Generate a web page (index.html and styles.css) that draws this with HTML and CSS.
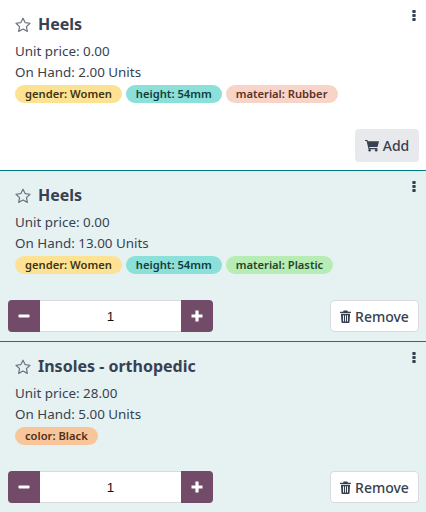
FILE: index.html
```html
<!DOCTYPE html>
<html lang="en">
<head>
    <meta charset="UTF-8">
    <meta name="viewport" content="width=device-width, initial-scale=1.0">
    <title>Products</title>
    <link rel="stylesheet" href="styles.css">
</head>
<body>

    <svg class="icon-defs" width="0" height="0">
        <symbol id="star" viewBox="0 0 16 16">
            <path d="M8 1.2l2.1 4.4 4.9.65-3.55 3.35.9 4.8L8 12.05 3.65 14.4l.9-4.8L1 6.25l4.9-.65z" fill="none" stroke="currentColor" stroke-width="1.2" stroke-linejoin="round"/>
        </symbol>
        <symbol id="dots" viewBox="0 0 4 11">
            <rect x="0.3" y="0" width="3.4" height="3" rx="0.7"/>
            <rect x="0.3" y="4" width="3.4" height="3" rx="0.7"/>
            <rect x="0.3" y="8" width="3.4" height="3" rx="0.7"/>
        </symbol>
        <symbol id="trash" viewBox="0 0 12 14">
            <path d="M4 0.5h4l.7 1.3H12v1.5H0V1.8h3.3z"/>
            <path d="M1 4h10l-.6 9a1 1 0 0 1-1 1H2.6a1 1 0 0 1-1-1zM3.3 5.5v7h1v-7zm2.2 0v7h1v-7zm2.2 0v7h1v-7z" fill-rule="evenodd"/>
        </symbol>
        <symbol id="cart" viewBox="0 0 15 13">
            <path d="M0 0.5h2.6l.5 1.5H15l-1.6 6H4.6l.3 1.2h8.4v1.2H3.8L1.7 1.7H0z"/>
            <circle cx="5" cy="11.6" r="1.4"/>
            <circle cx="12" cy="11.6" r="1.4"/>
        </symbol>
        <symbol id="minus" viewBox="0 0 12 12">
            <rect x="0.5" y="4.4" width="11" height="3.2" rx="0.8"/>
        </symbol>
        <symbol id="plus" viewBox="0 0 12 12">
            <path d="M4.4 0.5h3.2v3.9h3.9v3.2H7.6v3.9H4.4V7.6H0.5V4.4h3.9z"/>
        </symbol>
    </svg>

    <div class="card">
        <svg class="menu"><use href="#dots"/></svg>
        <h2 class="title"><svg class="star"><use href="#star"/></svg>Heels</h2>
        <p class="line">Unit price: 0.00</p>
        <p class="line">On Hand: 2.00 Units</p>
        <div class="tags">
            <span class="tag yellow">gender: Women</span>
            <span class="tag teal">height: 54mm</span>
            <span class="tag salmon">material: Rubber</span>
        </div>
        <div class="actions end">
            <button class="btn add"><svg class="cart"><use href="#cart"/></svg>Add</button>
        </div>
    </div>

    <div class="card selected">
        <svg class="menu"><use href="#dots"/></svg>
        <h2 class="title"><svg class="star"><use href="#star"/></svg>Heels</h2>
        <p class="line">Unit price: 0.00</p>
        <p class="line">On Hand: 13.00 Units</p>
        <div class="tags">
            <span class="tag yellow">gender: Women</span>
            <span class="tag teal">height: 54mm</span>
            <span class="tag green">material: Plastic</span>
        </div>
        <div class="actions">
            <div class="qty">
                <button class="step"><svg class="step-icon"><use href="#minus"/></svg></button>
                <input class="qty-input" type="text" value="1">
                <button class="step"><svg class="step-icon"><use href="#plus"/></svg></button>
            </div>
            <button class="btn remove"><svg class="trash"><use href="#trash"/></svg>Remove</button>
        </div>
    </div>

    <div class="card selected last">
        <svg class="menu"><use href="#dots"/></svg>
        <h2 class="title"><svg class="star"><use href="#star"/></svg>Insoles - orthopedic</h2>
        <p class="line">Unit price: 28.00</p>
        <p class="line">On Hand: 5.00 Units</p>
        <div class="tags">
            <span class="tag orange">color: Black</span>
        </div>
        <div class="actions">
            <div class="qty">
                <button class="step"><svg class="step-icon"><use href="#minus"/></svg></button>
                <input class="qty-input" type="text" value="1">
                <button class="step"><svg class="step-icon"><use href="#plus"/></svg></button>
            </div>
            <button class="btn remove"><svg class="trash"><use href="#trash"/></svg>Remove</button>
        </div>
    </div>

</body>
</html>
```

FILE: styles.css
```css
/* General Styles */
body {
    font-family: 'Noto Sans', sans-serif;
    font-size: 13.4px;
    margin: 0;
    color: #374151;
    background-color: #fff;
    overflow: hidden;
}

.icon-defs {
    display: block;
    height: 0;
}

/* Cards */
.card {
    position: relative;
    display: flex;
    flex-direction: column;
    height: 171px;
    box-sizing: border-box;
    padding: 15px 7px 8px 15px;
    border-bottom: 1px solid #017e84;
}

.card.selected {
    padding-bottom: 9px;
    background-color: #e6f2f2;
}

.card.last {
    height: 170px;
    border-bottom: none;
}

.menu {
    position: absolute;
    top: 10px;
    right: 10px;
    width: 4px;
    height: 11px;
    fill: #374151;
}

.title {
    display: flex;
    align-items: center;
    gap: 7px;
    margin: 0 0 7px;
    font-size: 16px;
    font-weight: 700;
    line-height: 19px;
}

.star {
    width: 16px;
    height: 16px;
    color: #6b7280;
}

.line {
    margin: 0;
    line-height: 21px;
}

/* Tags */
.tags {
    display: flex;
    gap: 4px;
    margin-top: 2px;
}

.tag {
    padding: 0 10px;
    border-radius: 9px;
    font-size: 11.2px;
    font-weight: 600;
    line-height: 18px;
}

.yellow { background-color: #fde293; color: #3d3410; }
.teal { background-color: #8be0da; color: #123c39; }
.salmon { background-color: #f8d3c7; color: #5a3226; }
.green { background-color: #b7ecb4; color: #24452a; }
.orange { background-color: #f9c69b; color: #4f3016; }

/* Bottom row */
.actions {
    display: flex;
    justify-content: space-between;
    align-items: center;
    margin-top: auto;
    margin-left: -7px;
}

.actions.end {
    justify-content: flex-end;
}

.btn {
    display: flex;
    align-items: center;
    justify-content: center;
    gap: 4px;
    box-sizing: border-box;
    border-radius: 4px;
    font-family: inherit;
    font-size: 14px;
    font-weight: 500;
    color: #374151;
}

.add {
    width: 64px;
    height: 33px;
    border: none;
    background-color: #e7e9ed;
}

.remove {
    width: 89px;
    height: 32px;
    border: 1px solid #d8dadd;
    background-color: #fff;
}

.cart {
    width: 14px;
    height: 13px;
    fill: #374151;
}

.trash {
    width: 11px;
    height: 13px;
    fill: #374151;
}

/* Quantity */
.qty {
    display: flex;
    width: 205px;
    height: 32px;
}

.step {
    display: flex;
    align-items: center;
    justify-content: center;
    width: 32px;
    padding: 0;
    border: none;
    background-color: #714b67;
}

.step:first-child {
    border-radius: 4px 0 0 4px;
}

.step:last-child {
    border-radius: 0 4px 4px 0;
}

.step-icon {
    width: 12px;
    height: 12px;
    fill: #fff;
}

.qty-input {
    flex: 1;
    min-width: 0;
    box-sizing: border-box;
    padding: 0;
    border: 1px solid #d8dadd;
    border-width: 1px 0;
    background-color: #fff;
    color: #111;
    font-family: 'Liberation Sans', sans-serif;
    font-size: 13.4px;
    text-align: center;
}
```
